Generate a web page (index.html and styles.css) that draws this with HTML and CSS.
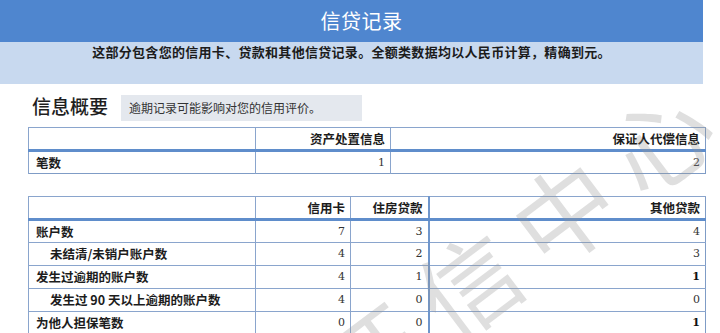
FILE: index.html
```html
<!DOCTYPE html>
<html lang="zh">
<head>
<meta charset="utf-8">
<title>信贷记录</title>
<link rel="stylesheet" href="styles.css">
</head>
<body>
<div class="page">
  <header class="banner">
    <div class="banner-title">信贷记录</div>
    <div class="banner-note">这部分包含您的信用卡、贷款和其他信贷记录。全额类数据均以人民币计算，精确到元。</div>
  </header>

  <section class="summary">
    <div class="summary-head">
      <h2 class="summary-title">信息概要</h2>
      <div class="summary-tip">逾期记录可能影响对您的信用评价。</div>
    </div>

    <table class="grid grid-a">
      <colgroup><col class="c-label"><col class="c-a2"><col class="c-a3"></colgroup>
      <thead>
        <tr><th></th><th>资产处置信息</th><th>保证人代偿信息</th></tr>
      </thead>
      <tbody>
        <tr><td class="label">笔数</td><td class="num">1</td><td class="num">2</td></tr>
      </tbody>
    </table>

    <table class="grid grid-b">
      <colgroup><col class="c-label"><col class="c-b2"><col class="c-b3"><col class="c-b4"></colgroup>
      <thead>
        <tr><th></th><th>信用卡</th><th class="sep">住房贷款</th><th>其他贷款</th></tr>
      </thead>
      <tbody>
        <tr><td class="label">账户数</td><td class="num">7</td><td class="num sep">3</td><td class="num">4</td></tr>
        <tr><td class="label sub">未结清/未销户账户数</td><td class="num">4</td><td class="num sep">2</td><td class="num">3</td></tr>
        <tr><td class="label">发生过逾期的账户数</td><td class="num">4</td><td class="num sep">1</td><td class="num strong">1</td></tr>
        <tr><td class="label sub">发生过 90 天以上逾期的账户数</td><td class="num">4</td><td class="num sep">0</td><td class="num">0</td></tr>
        <tr><td class="label">为他人担保笔数</td><td class="num">0</td><td class="num sep">0</td><td class="num strong">1</td></tr>
      </tbody>
    </table>
  </section>

  <div class="watermark" aria-hidden="true">征信中心</div>
</div>
</body>
</html>
```

FILE: styles.css
```css
* { box-sizing: border-box; }

html, body {
  margin: 0;
  padding: 0;
  background: #ffffff;
}

body {
  font-family: "Noto Sans CJK SC", "Noto Sans", "DejaVu Sans", sans-serif;
  color: #1c1c1c;
  overflow: hidden;
}

.page {
  position: relative;
  width: 720px;
  height: 333px;
  overflow: hidden;
}

.banner {
  width: 703px;
}

.banner-title {
  height: 42px;
  background: #4f86cf;
  color: #ffffff;
  font-size: 20px;
  line-height: 42px;
  text-align: center;
  padding-left: 20px;
  letter-spacing: 0.5px;
}

.banner-note {
  height: 42px;
  background: #c8d9ef;
  font-size: 13px;
  font-weight: 700;
  letter-spacing: 0.3px;
  text-align: center;
  padding-top: 1px;
  line-height: 18px;
}

.summary {
  width: 705px;
  padding: 11px 0 0 28px;
}

.summary-head {
  display: flex;
  align-items: center;
  height: 26px;
}

.summary-title {
  margin: 0;
  font-size: 19px;
  font-weight: 500;
  color: #1e1e1e;
  padding-left: 4px;
  width: 93px;
  line-height: 26px;
  position: relative;
  top: -2px;
}

.summary-tip {
  width: 241px;
  height: 26px;
  background: #e4e8ee;
  font-size: 12px;
  line-height: 26px;
  padding-left: 8px;
  color: #333;
}

.grid {
  width: 677px;
  border-collapse: collapse;
  table-layout: fixed;
  border: 1px solid #7f9cc6;
  font-size: 12.5px;
}

.grid-a { margin-top: 6px; }
.grid-b { margin-top: 22px; }

.c-label { width: 227px; }
.c-a2 { width: 135px; }
.c-a3 { width: 315px; }
.c-b2 { width: 95px; }
.c-b3 { width: 78px; }
.c-b4 { width: 277px; }

.grid th,
.grid td {
  height: 23px;
  padding: 0 5px 0 7px;
  border-left: 1px solid #8aa5cd;
  border-top: 1px solid #8aa5cd;
  line-height: 20px;
  white-space: nowrap;
}

.grid th {
  text-align: right;
  font-weight: 700;
  border-bottom: 3px solid #5f8dcb;
}

.grid .sep { border-right: 2px solid #6f96cc; }

.grid td.label {
  font-weight: 700;
  text-align: left;
}

.grid td.sub { padding-left: 21px; }

.grid td.num {
  text-align: right;
  font-family: "DejaVu Serif", "Liberation Serif", serif;
  font-size: 11px;
  color: #333;
}

.grid td.strong {
  font-weight: 700;
  color: #111;
}

.watermark {
  position: absolute;
  left: 282px;
  top: 190px;
  font-size: 100px;
  line-height: 1;
  letter-spacing: 20px;
  font-weight: 400;
  color: rgba(150, 150, 150, 0.3);
  transform: rotate(-37deg);
  transform-origin: 50% 50%;
  pointer-events: none;
  white-space: nowrap;
}
```
